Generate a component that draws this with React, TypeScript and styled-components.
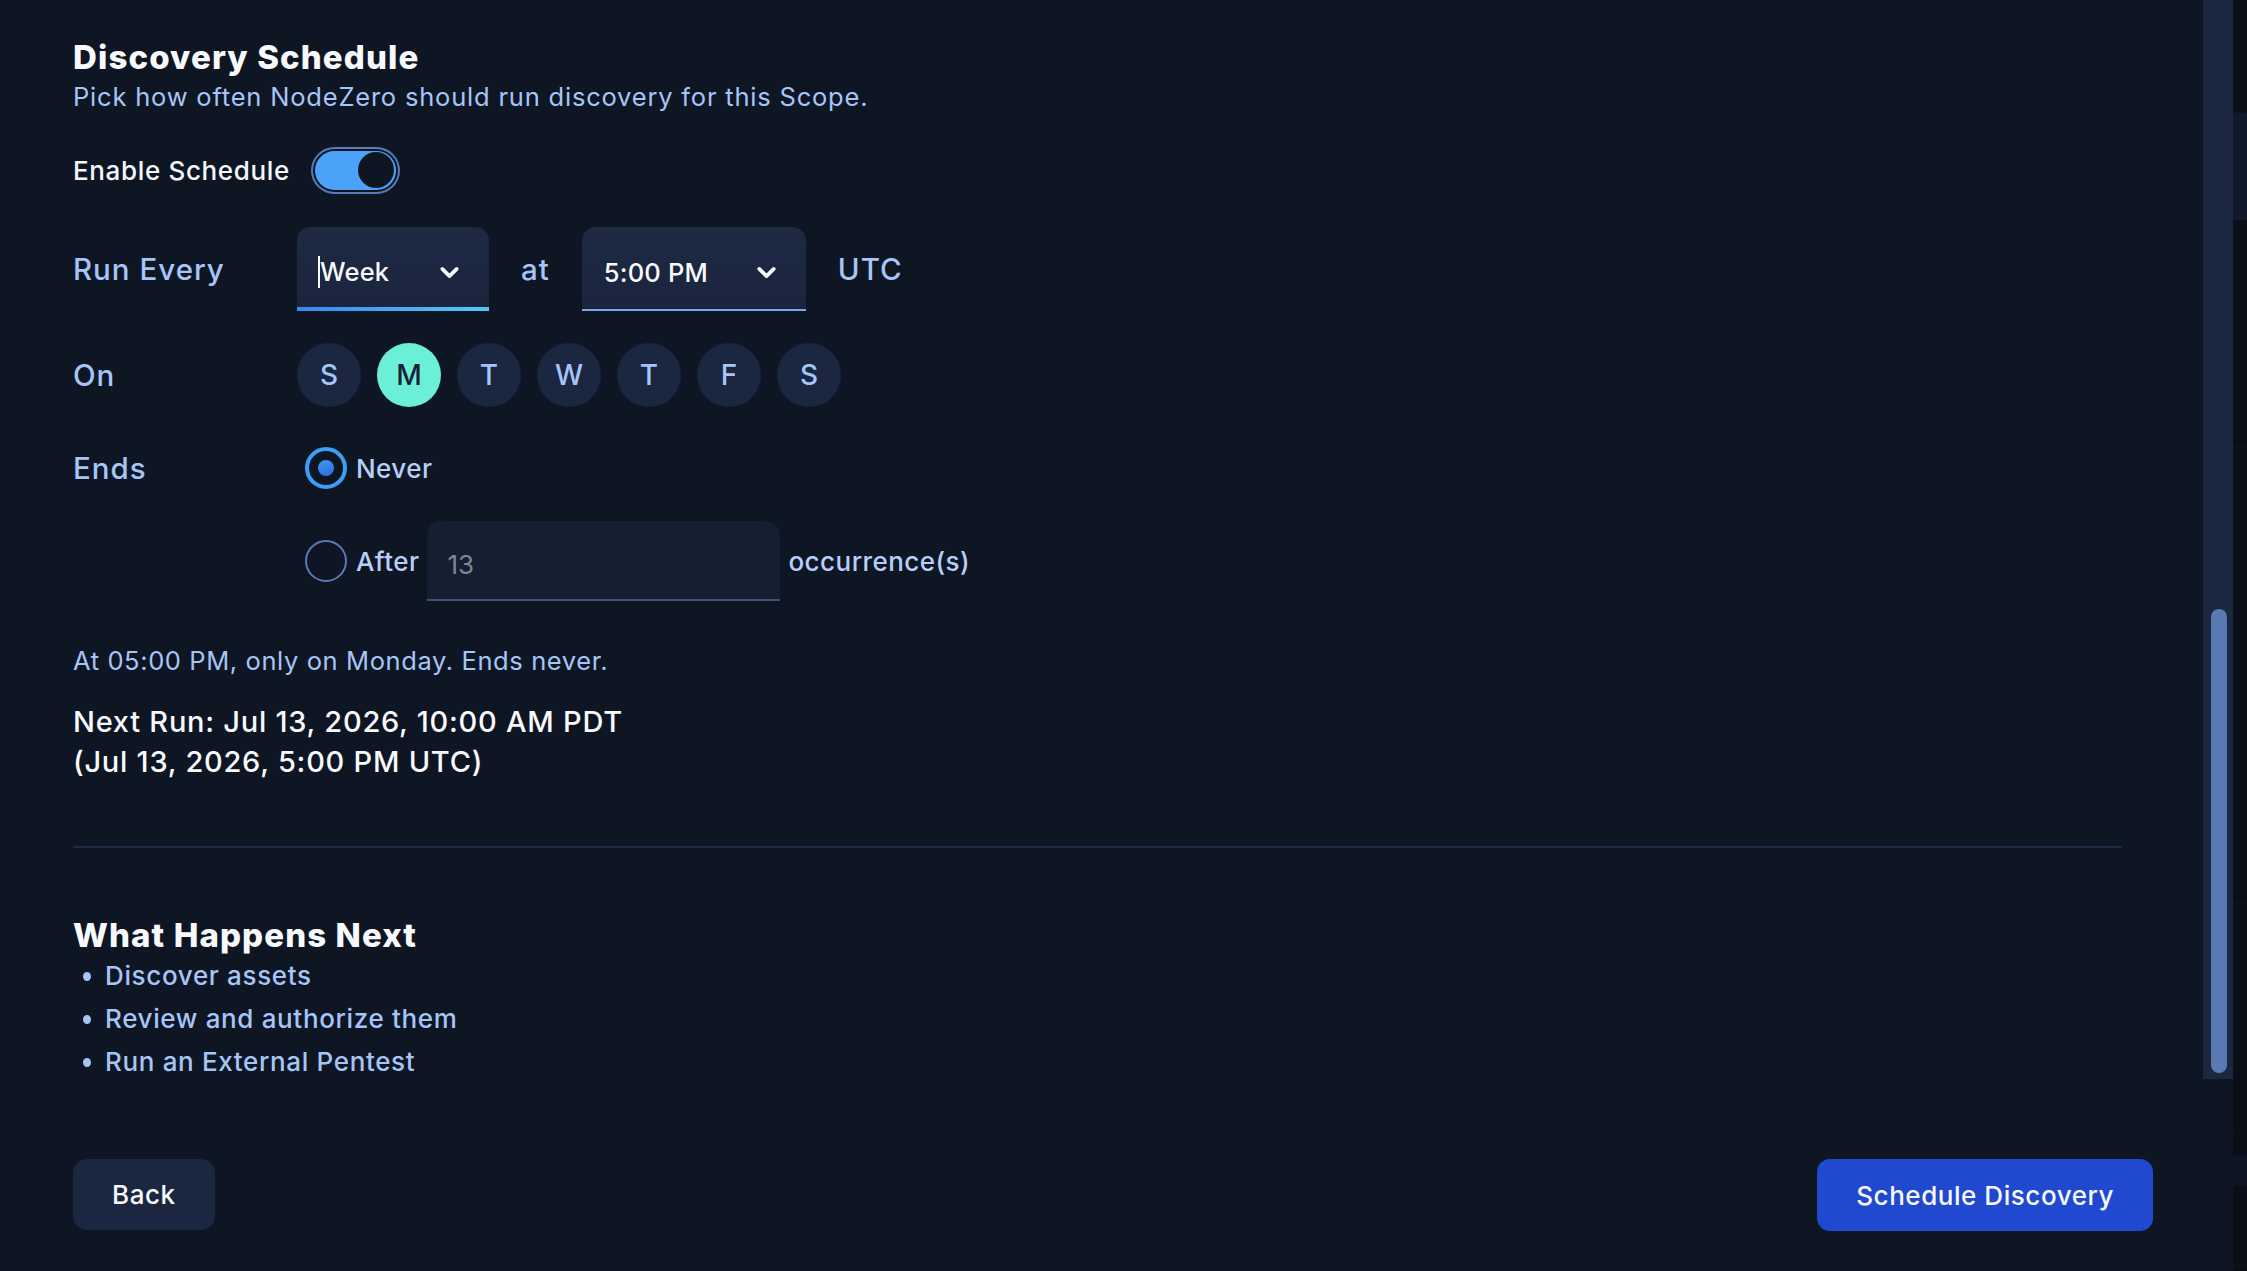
import React from "react";
import styled, { createGlobalStyle } from "styled-components";
import { ChevronDown } from "lucide-react";

const GlobalStyle = createGlobalStyle`
  html, body {
    margin: 0;
    padding: 0;
    background: #0f1623;
    overflow: hidden;
  }
  * {
    box-sizing: border-box;
  }
  body {
    font-family: "Inter", "Liberation Sans", sans-serif;
    color: #f4f7fc;
  }
`;

const LIGHT_BLUE = "#a6c5f7";
const SURFACE = "#1b2640";

const Screen = styled.div`
  display: flex;
  width: 100vw;
  height: 100vh;
  background: #0f1623;
`;

const Panel = styled.div`
  flex: 1;
  display: flex;
  flex-direction: column;
  min-width: 0;
`;

const ScrollArea = styled.div`
  display: flex;
  height: 1079px;
  overflow: hidden;
`;

const Content = styled.div`
  flex: 1;
  min-width: 0;
  padding: 37px 81px 0 73px;
`;

const ScrollTrack = styled.div`
  width: 30px;
  flex-shrink: 0;
  background: #1c2740;
  padding: 609px 6px 0 8px;
`;

const ScrollThumb = styled.div`
  width: 16px;
  height: 464px;
  border-radius: 8px;
  background: #5a7ab5;
`;

const EdgeStrip = styled.div`
  width: 14px;
  flex-shrink: 0;
  display: flex;
  flex-direction: column;
  background: #0a0e17;
`;

const EdgeSegment = styled.div<{ $h: number; $tone?: string }>`
  height: ${({ $h }) => $h}px;
  background: ${({ $tone }) => $tone ?? "#0a0e17"};
  border-bottom: 1px solid #0d1320;
`;

const Heading = styled.h2`
  margin: 0;
  font-size: 33px;
  line-height: 40px;
  font-weight: 800;
  color: #f7f9fd;
  letter-spacing: 1.1px;
`;

const Subtitle = styled.p`
  margin: 2px 0 0;
  font-size: 25.5px;
  line-height: 36px;
  letter-spacing: 0.8px;
  color: ${LIGHT_BLUE};
`;

const ToggleRow = styled.div`
  display: flex;
  align-items: center;
  gap: 25px;
  height: 48px;
  margin-top: 31px;
  font-size: 26px;
  font-weight: 500;
  letter-spacing: 0.65px;
`;

const ToggleTrack = styled.div<{ $on: boolean }>`
  width: 81px;
  height: 39px;
  border-radius: 20px;
  padding: 1px 2px;
  display: flex;
  align-items: center;
  justify-content: ${({ $on }) => ($on ? "flex-end" : "flex-start")};
  background: ${({ $on }) => ($on ? "#4aa3f8" : "#2a3652")};
  box-shadow: 0 0 0 2px #0f1623, 0 0 0 4px #5a7ab5;
`;

const ToggleKnob = styled.div`
  width: 36px;
  height: 36px;
  border-radius: 50%;
  background: #0f1623;
`;

const FieldRow = styled.div<{ $gap: number; $height: number }>`
  display: flex;
  align-items: center;
  margin-top: ${({ $gap }) => $gap}px;
  min-height: ${({ $height }) => $height}px;
`;

const FieldLabel = styled.div<{ $top?: boolean }>`
  width: 224px;
  flex-shrink: 0;
  align-self: ${({ $top }) => ($top ? "flex-start" : "center")};
  line-height: 42px;
  font-size: 29.5px;
  font-weight: 500;
  letter-spacing: 1px;
  color: ${LIGHT_BLUE};
`;

const InlineWord = styled.span`
  font-size: 29.5px;
  font-weight: 500;
  letter-spacing: 1px;
  color: ${LIGHT_BLUE};
`;

const Controls = styled.div<{ $gap: number }>`
  display: flex;
  align-items: center;
  gap: ${({ $gap }) => $gap}px;
`;

const Select = styled.div<{ $width: number; $focused?: boolean }>`
  position: relative;
  width: ${({ $width }) => $width}px;
  height: 84px;
  display: flex;
  align-items: center;
  justify-content: space-between;
  padding: 6px 25px 0 ${({ $focused }) => ($focused ? 21 : 22)}px;
  border-radius: 14px 14px 0 0;
  background: linear-gradient(180deg, #1e2944 0%, #1a243d 100%);
  font-size: 25.5px;
  font-weight: 500;
  letter-spacing: 0.2px;
  color: #f7f9fd;

  &::after {
    content: "";
    position: absolute;
    left: 0;
    right: 0;
    bottom: 0;
    height: ${({ $focused }) => ($focused ? 4 : 2)}px;
    background: ${({ $focused }) =>
      $focused ? "linear-gradient(90deg, #3b86f2 0%, #58c6f7 100%)" : "#7ea3e6"};
  }
`;

const Caret = styled.span`
  display: inline-block;
  width: 2px;
  height: 32px;
  margin-right: 0;
  vertical-align: -7px;
  background: #f7f9fd;
`;

const DayList = styled.div`
  display: flex;
  gap: 16px;
`;

const DayChip = styled.div<{ $active?: boolean }>`
  width: 64px;
  height: 64px;
  border-radius: 50%;
  display: flex;
  align-items: center;
  justify-content: center;
  font-size: 28px;
  font-weight: 500;
  background: ${({ $active }) => ($active ? "#6cefd7" : SURFACE)};
  color: ${({ $active }) => ($active ? "#17223a" : LIGHT_BLUE)};
`;

const OptionStack = styled.div`
  display: flex;
  flex-direction: column;
  gap: 32px;
  padding-left: 8px;
`;

const OptionRow = styled.label`
  display: flex;
  align-items: center;
  gap: 8px;
  font-size: 26px;
  font-weight: 500;
  letter-spacing: 0.45px;
  color: #b7cff7;
`;

const Radio = styled.span<{ $checked?: boolean }>`
  width: 42px;
  height: 42px;
  border-radius: 50%;
  flex-shrink: 0;
  display: flex;
  align-items: center;
  justify-content: center;
  margin-right: 1px;
  border: ${({ $checked }) => ($checked ? "4px solid #3d9ef6" : "2px solid #5a7ab5")};

  &::after {
    content: "";
    display: ${({ $checked }) => ($checked ? "block" : "none")};
    width: 16px;
    height: 16px;
    border-radius: 50%;
    background: linear-gradient(160deg, #4096f3 0%, #2b6fd9 100%);
  }
`;

const CountInput = styled.input`
  width: 353px;
  height: 80px;
  padding: 8px 20px 0;
  border: none;
  border-bottom: 2px solid #3e5275;
  border-radius: 14px 14px 0 0;
  background: #141f31;
  font-family: inherit;
  font-size: 26px;
  color: #f4f7fc;
  outline: none;

  &::placeholder {
    color: #80868f;
  }
`;

const Summary = styled.p`
  margin: 42px 0 0;
  font-size: 25.5px;
  line-height: 36px;
  letter-spacing: 0.6px;
  color: ${LIGHT_BLUE};
`;

const NextRun = styled.p`
  margin: 23px 0 0;
  font-size: 29px;
  line-height: 40px;
  font-weight: 500;
  letter-spacing: 0.75px;
  color: #f7f9fd;
`;

const Divider = styled.hr`
  margin: 64px 0 0;
  border: none;
  height: 2px;
  background: #1e2b44;
`;

const SubHeading = styled(Heading)`
  margin-top: 68px;
  line-height: 38px;
`;

const StepList = styled.ul`
  margin: 0;
  padding: 0 0 0 32px;
  list-style: none;
`;

const Step = styled.li`
  position: relative;
  font-size: 26px;
  line-height: 43px;
  font-weight: 500;
  letter-spacing: 0.65px;
  color: ${LIGHT_BLUE};

  &::before {
    content: "";
    position: absolute;
    left: -22px;
    top: 18px;
    width: 8px;
    height: 9px;
    border-radius: 50%;
    background: ${LIGHT_BLUE};
  }
`;

const Footer = styled.div`
  display: flex;
  justify-content: space-between;
  align-items: flex-start;
  flex: 1;
  padding: 80px 80px 0 73px;
`;

const Button = styled.button<{ $primary?: boolean }>`
  height: ${({ $primary }) => ($primary ? 72 : 71)}px;
  padding: 0 39px;
  border: none;
  border-radius: ${({ $primary }) => ($primary ? 13 : 14)}px;
  background: ${({ $primary }) => ($primary ? "#2049cf" : SURFACE)};
  color: #f7f9fd;
  font-family: inherit;
  font-size: 26px;
  font-weight: 500;
  letter-spacing: 0.55px;
  cursor: pointer;
`;

const DAYS = [
  { key: "sun", letter: "S" },
  { key: "mon", letter: "M", active: true },
  { key: "tue", letter: "T" },
  { key: "wed", letter: "W" },
  { key: "thu", letter: "T" },
  { key: "fri", letter: "F" },
  { key: "sat", letter: "S" },
];

const STEPS = ["Discover assets", "Review and authorize them", "Run an External Pentest"];

const EDGE = [
  { h: 113 },
  { h: 108, tone: "#111a2b" },
  { h: 113 },
  { h: 114 },
  { h: 114 },
  { h: 114 },
  { h: 114 },
  { h: 114 },
  { h: 116 },
  { h: 113 },
  { h: 23 },
  { h: 30, tone: "#0e1523" },
  { h: 79 },
];

export default function App() {
  return (
    <>
      <GlobalStyle />
      <Screen>
        <Panel>
          <ScrollArea>
            <Content>
              <Heading>Discovery Schedule</Heading>
              <Subtitle>Pick how often NodeZero should run discovery for this Scope.</Subtitle>

              <ToggleRow>
                <span>Enable Schedule</span>
                <ToggleTrack $on>
                  <ToggleKnob />
                </ToggleTrack>
              </ToggleRow>

              <FieldRow $gap={33} $height={84}>
                <FieldLabel>Run Every</FieldLabel>
                <Controls $gap={32}>
                  <Select $width={192} $focused>
                    <span>
                      <Caret />
                      Week
                    </span>
                    <ChevronDown size={29} strokeWidth={3} />
                  </Select>
                  <InlineWord>at</InlineWord>
                  <Select $width={224}>
                    <span>5:00 PM</span>
                    <ChevronDown size={29} strokeWidth={3} />
                  </Select>
                  <InlineWord>UTC</InlineWord>
                </Controls>
              </FieldRow>

              <FieldRow $gap={32} $height={64}>
                <FieldLabel>On</FieldLabel>
                <DayList>
                  {DAYS.map((d) => (
                    <DayChip key={d.key} $active={d.active}>
                      {d.letter}
                    </DayChip>
                  ))}
                </DayList>
              </FieldRow>

              <FieldRow $gap={40} $height={42}>
                <FieldLabel $top>Ends</FieldLabel>
                <OptionStack>
                  <OptionRow>
                    <Radio $checked />
                    Never
                  </OptionRow>
                  <OptionRow>
                    <Radio />
                    After
                    <CountInput placeholder="13" />
                    occurrence(s)
                  </OptionRow>
                </OptionStack>
              </FieldRow>

              <Summary>At 05:00 PM, only on Monday. Ends never.</Summary>
              <NextRun>
                Next Run: Jul 13, 2026, 10:00 AM PDT
                <br />
                (Jul 13, 2026, 5:00 PM UTC)
              </NextRun>

              <Divider />

              <SubHeading>What Happens Next</SubHeading>
              <StepList>
                {STEPS.map((s) => (
                  <Step key={s}>{s}</Step>
                ))}
              </StepList>
            </Content>
            <ScrollTrack>
              <ScrollThumb />
            </ScrollTrack>
          </ScrollArea>

          <Footer>
            <Button>Back</Button>
            <Button $primary>Schedule Discovery</Button>
          </Footer>
        </Panel>
        <EdgeStrip>
          {EDGE.map((seg, i) => (
            <EdgeSegment key={i} $h={seg.h} $tone={seg.tone} />
          ))}
        </EdgeStrip>
      </Screen>
    </>
  );
}
